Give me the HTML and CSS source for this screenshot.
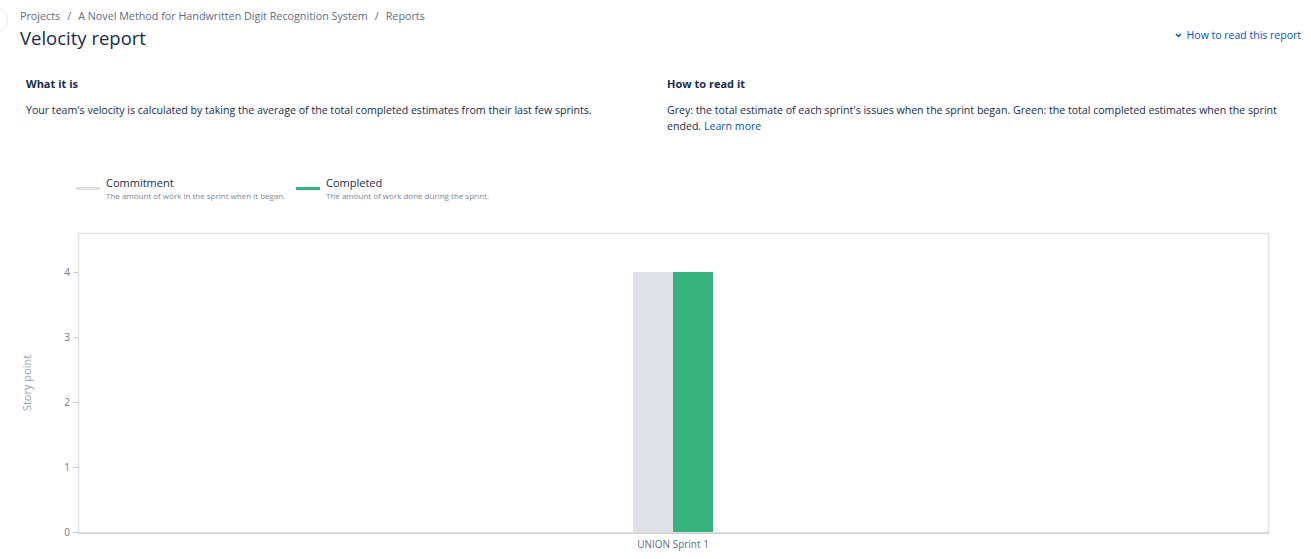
FILE: index.html
```html
<!DOCTYPE html>
<html>
<head>
<meta charset="utf-8">
<link rel="stylesheet" href="styles.css">
</head>
<body>
<div class="page">
  <span class="edge-btn"></span>
  <header class="top">
    <div class="heading">
      <nav class="crumbs"><a>Projects</a><span class="sep">/</span><a>A Novel Method for Handwritten Digit Recognition System</a><span class="sep">/</span><a>Reports</a></nav>
      <h1 class="title">Velocity report</h1>
    </div>
    <a class="howto"><svg class="chev" width="7" height="5" viewBox="0 0 7 5"><path d="M1 1 L3.5 3.5 L6 1" fill="none" stroke="#0052cc" stroke-width="1.5"/></svg>How to read this report</a>
  </header>
  <section class="info">
    <div class="col">
      <h2>What it is</h2>
      <p>Your team's velocity is calculated by taking the average of the total completed estimates from their last few sprints.</p>
    </div>
    <div class="col col2">
      <h2>How to read it</h2>
      <p>Grey: the total estimate of each sprint's issues when the sprint began. Green: the total completed estimates when the sprint ended. <a class="learn">Learn more</a></p>
    </div>
  </section>
  <div class="legend">
    <div class="item"><span class="swatch grey"></span><div><div class="lname">Commitment</div><div class="ldesc">The amount of work in the sprint when it began.</div></div></div>
    <div class="item"><span class="swatch green"></span><div><div class="lname">Completed</div><div class="ldesc">The amount of work done during the sprint.</div></div></div>
  </div>
  <div class="chart">
    <svg width="1311" height="334" viewBox="0 225 1311 334">
      <rect x="78.5" y="233.5" width="1190" height="300" fill="none" stroke="#e2e2e2" stroke-width="1.5"/>
      <line x1="78" y1="533" x2="1269" y2="533" stroke="#cfcfcf" stroke-width="1.5"/>
      <g class="ticks" stroke="#cccccc" stroke-width="1">
        <line x1="73" y1="272.5" x2="78" y2="272.5"/>
        <line x1="73" y1="337.5" x2="78" y2="337.5"/>
        <line x1="73" y1="402.5" x2="78" y2="402.5"/>
        <line x1="73" y1="467.5" x2="78" y2="467.5"/>
        <line x1="73" y1="532.5" x2="78" y2="532.5"/>
      </g>
      <g class="ylab">
        <text x="70" y="276" text-anchor="end">4</text>
        <text x="70" y="341" text-anchor="end">3</text>
        <text x="70" y="406" text-anchor="end">2</text>
        <text x="70" y="471" text-anchor="end">1</text>
        <text x="70" y="536" text-anchor="end">0</text>
      </g>
      <text class="ytitle" transform="translate(31 383) rotate(-90)" text-anchor="middle">Story point</text>
      <rect x="633" y="272" width="40" height="260" fill="#dfe1e6"/>
      <rect x="673" y="272" width="40" height="260" fill="#36b37e"/>
      <text class="xlab" x="673" y="548" text-anchor="middle">UNION Sprint 1</text>
    </svg>
  </div>
</div>
</body>
</html>
```
FILE: styles.css
```css
* { box-sizing: border-box; }
html, body { margin: 0; padding: 0; background: #fff; }
body { font-family: "Open Sans", "Noto Sans", sans-serif; color: #172b4d; overflow: hidden; }
.page { position: relative; width: 1311px; height: 559px; }
.edge-btn {
  position: absolute; left: -20px; top: 6px; width: 28px; height: 28px;
  border-radius: 50%; border: 1px solid #ebecf0; background: #fff;
}
.top { display: flex; justify-content: space-between; align-items: flex-start; padding: 8px 10px 0 20px; }
.crumbs { font-size: 10.75px; line-height: 16px; color: #5e6c84; }
.crumbs .sep { margin: 0 7px; }
.title { margin: 2px 0 0; font-size: 18.5px; line-height: 24px; font-weight: 500; color: #172b4d; }
.howto { margin-top: 19px; font-size: 10.5px; line-height: 16px; color: #0052cc; display: flex; align-items: center; }
.chev { margin-right: 5px; }
.info { display: flex; padding: 26px 30px 0 26px; }
.col { width: 641px; flex: none; }
.col2 { flex: 1; width: auto; }
.info h2 { margin: 0; font-size: 11px; line-height: 16px; font-weight: 700; color: #172b4d; }
.info p { margin: 10px 0 0; font-size: 10.6px; line-height: 16px; color: #172b4d; }
.learn { color: #0052cc; }
.legend { display: flex; padding: 42px 0 0 76px; }
.item { display: flex; width: 220px; white-space: nowrap; }
.swatch { width: 24px; height: 3px; margin: 11px 6px 0 0; flex: none; }
.swatch.grey { background: #dfe1e6; }
.swatch.green { background: #36b37e; }
.lname { font-size: 11px; line-height: 14px; color: #172b4d; }
.ldesc { font-size: 8px; line-height: 12px; color: #7a869a; }
.chart { position: absolute; left: 0; top: 225px; }
.chart svg { display: block; }
.ylab text { font-size: 10px; fill: #6b778c; font-family: "Open Sans", sans-serif; }
.ytitle { font-size: 11px; fill: #97a0af; font-family: "Open Sans", sans-serif; }
.xlab { font-size: 10px; fill: #5e6c84; font-family: "Open Sans", sans-serif; }
```
